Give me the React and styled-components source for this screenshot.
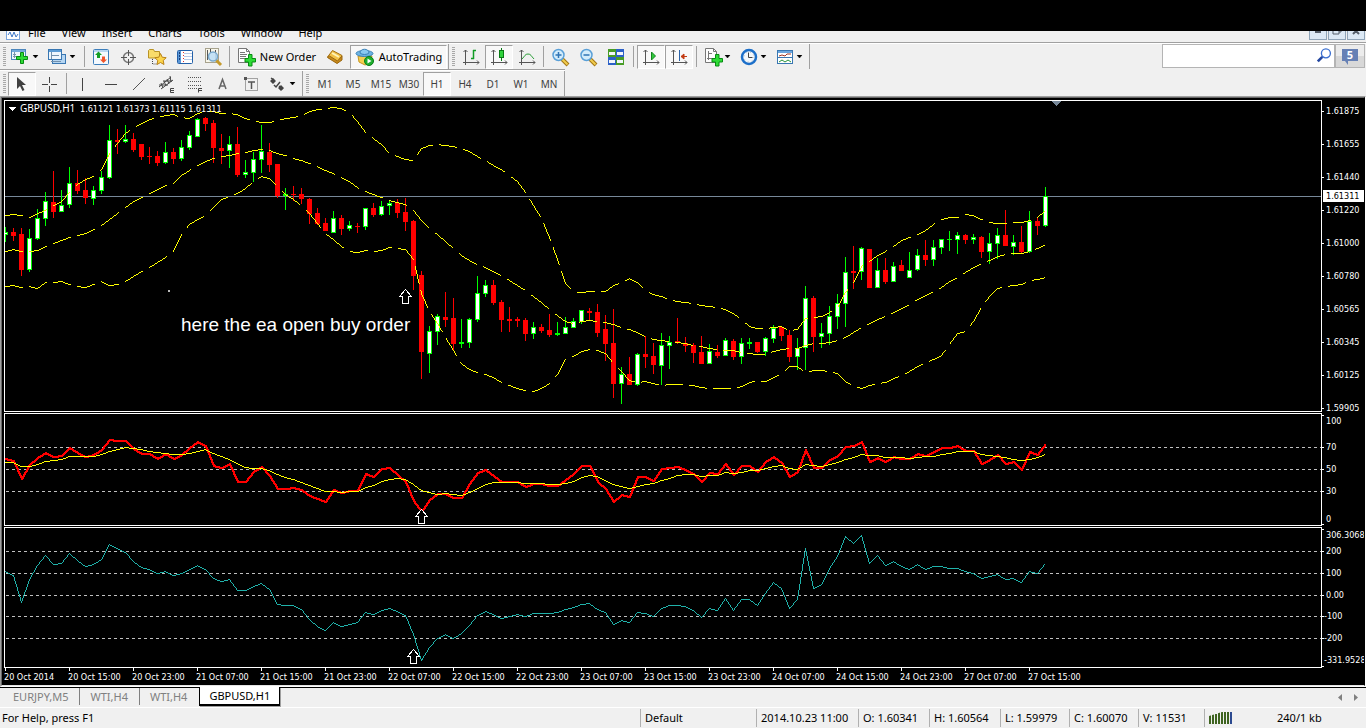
import React from "react";
import styled, { createGlobalStyle, css } from "styled-components";

const GlobalStyle = createGlobalStyle`
  * { box-sizing: border-box; }
  body { margin: 0; background: #f0f0f0; color: #000; font-family: "Noto Sans", "Open Sans", sans-serif; font-size: 11px; }
  button, input { font: inherit; color: inherit; }
`;

/* ---------- data ---------- */

const STEP = 8;
const FIRST_X = 5;
const PRICE_TOP = 101;
const RSI_TOP = 414;
const CCI_TOP = 528;
const barX = (i) => FIRST_X + i * STEP;

// direction, high, body top, body bottom, low
const CANDLES = `g 227 232 235 242|r 228 232 236 241|r 228 234 270 276|g 229 238 270 272|g 209 218 239 240|g 192 201 219 226|r 171 202 212 218|g 190 205 212 212|g 167 183 205 208|r 170 183 191 194|r 178 190 198 204|g 186 190 199 205|g 171 177 191 194|g 125 140 178 179|r 129 140 142 154|g 125 139 142 143|r 133 139 150 152|r 144 144 157 160|r 147 156 157 164|r 151 156 163 166|g 142 152 163 164|r 148 152 159 164|g 140 147 159 161|g 131 135 148 150|g 118 119 137 137|r 117 118 124 131|r 120 123 148 163|r 134 148 151 164|g 136 144 151 168|r 127 144 175 177|g 160 172 175 178|g 152 159 173 182|g 125 151 160 173|r 143 152 165 172|r 164 164 196 198|g 188 194 196 210|r 186 194 195 201|r 188 194 199 204|r 198 199 214 224|r 208 213 224 225|r 218 223 231 231|g 211 218 233 233|r 215 218 229 235|g 221 225 229 231|r 223 226 227 233|g 208 208 227 230|r 203 208 215 217|g 201 206 215 216|g 201 203 206 215|r 199 203 213 218|r 198 212 222 231|r 220 221 276 290|r 271 275 352 379|g 326 331 354 373|g 314 316 332 345|r 292 317 320 327|r 298 318 344 350|g 319 342 344 348|g 318 319 343 348|g 276 293 320 322|g 280 285 294 297|r 280 285 303 305|r 300 302 320 332|r 307 319 321 332|r 317 319 321 327|r 318 320 334 341|g 322 327 334 339|r 324 327 331 333|r 314 330 335 337|g 322 333 335 336|g 317 327 334 334|g 318 321 328 328|g 310 310 322 324|r 308 311 313 320|r 304 312 333 337|r 315 329 344 361|r 309 343 384 398|g 367 374 384 404|r 357 374 385 385|g 353 354 385 386|r 336 354 357 368|r 343 356 365 374|g 333 345 366 385|g 336 342 346 369|r 318 341 343 344|r 337 343 346 352|r 343 345 353 363|r 336 352 364 364|g 344 351 364 364|r 345 352 356 358|g 338 340 356 356|r 339 341 357 360|g 338 343 357 364|g 338 342 344 349|r 342 342 352 353|g 337 338 352 356|g 325 328 339 343|r 326 327 336 341|r 330 335 357 362|g 338 348 357 370|g 286 298 348 370|r 296 298 337 352|g 323 333 337 348|g 306 316 334 345|g 294 303 317 329|g 257 272 304 327|r 246 271 273 289|g 247 248 272 280|r 249 249 288 288|g 258 270 288 288|r 258 270 282 284|g 262 266 282 282|r 260 265 271 271|g 252 270 278 278|g 249 255 270 271|r 240 255 260 266|g 240 247 260 266|g 239 239 248 254|g 231 239 240 251|g 232 235 240 254|r 234 235 240 244|g 234 237 240 244|r 236 237 252 258|g 233 243 252 264|g 228 235 244 259|r 210 235 246 246|g 235 242 247 255|r 226 242 252 254|g 211 221 252 253|r 217 221 226 235|g 187 196 226 227`
  .split("|")
  .map((row) => {
    const [dir, ...n] = row.split(" ");
    const [high, top, bottom, low] = n.map(Number);
    return { up: dir === "g", high, top, bottom, low };
  });

const BAND_UPPER = [215,214,215,217,213,210,205,201,192,184,179,176,169,153,143,133,127,123,119,117,115,114,117,118,113,111,111,113,113,114,118,120,122,122,120,118,117,115,111,109,108,107,108,112,121,132,138,144,153,156,159,160,148,145,144,145,146,148,151,156,160,165,169,175,181,192,205,218,237,259,283,291,292,291,291,291,285,282,278,282,290,294,296,299,301,302,303,305,306,307,309,313,319,326,328,328,327,326,330,329,318,317,316,312,307,292,282,266,261,255,251,246,240,237,234,230,224,219,217,217,214,215,219,222,223,223,222,222,220,217,210];
const BAND_MIDDLE = [251,249,251,251,250,246,243,240,237,235,233,229,225,219,213,207,201,197,193,189,185,183,175,170,165,161,158,156,155,153,152,150,149,150,153,155,158,160,163,166,170,173,177,181,187,191,194,197,200,202,204,210,220,228,234,241,248,255,260,264,267,271,275,280,285,290,296,302,309,315,321,323,321,320,321,322,324,327,329,332,336,339,340,341,342,343,345,346,348,349,350,350,352,353,354,354,351,349,348,348,345,343,343,342,340,337,332,327,323,319,316,312,308,304,299,295,291,287,281,277,272,267,263,260,256,254,253,253,251,248,244];
const BAND_LOWER = [286,285,287,286,288,282,282,281,284,286,287,284,281,285,284,281,276,271,267,262,257,251,234,224,219,215,207,199,196,193,188,181,176,178,186,194,199,205,213,223,233,239,246,251,252,250,251,250,247,248,249,259,293,311,323,337,350,363,369,372,374,377,382,385,388,390,391,388,383,374,359,356,351,349,350,353,363,371,380,382,381,383,385,384,384,384,385,387,388,388,388,388,386,382,380,381,377,373,366,366,372,370,370,371,373,381,385,388,385,383,382,378,375,371,366,362,359,355,344,333,331,321,307,296,288,286,285,284,280,279,277];
const RSI = [459,461,479,465,458,453,457,456,448,453,457,455,450,440,441,441,449,454,454,459,454,459,455,448,442,446,466,468,464,482,482,472,467,476,489,489,488,490,496,499,502,490,493,491,491,474,477,469,468,475,482,501,512,500,494,494,498,498,484,473,470,476,482,482,482,487,484,484,486,486,480,474,466,466,482,489,502,495,497,477,477,481,469,468,467,470,474,482,473,474,464,475,466,466,472,462,457,463,477,472,450,468,468,460,456,447,446,442,462,458,462,457,459,459,454,456,452,448,448,446,451,451,464,460,455,464,462,470,452,455,444];
const RSI_AVG = [462,462,466,466,464,461,460,459,456,456,456,456,454,451,449,447,448,449,451,452,453,454,454,453,451,449,453,456,459,463,467,468,468,470,474,477,479,482,485,488,491,491,492,491,491,487,485,481,479,478,479,484,490,492,494,493,494,495,492,488,484,482,482,482,482,483,483,483,484,484,483,481,477,475,476,480,484,486,488,486,484,483,480,478,475,474,474,476,475,475,472,473,472,470,470,468,466,465,468,469,464,465,466,464,462,459,457,454,455,455,457,457,457,458,457,456,456,454,453,451,451,451,454,455,456,457,459,460,459,457,454];
const CCI = [571,575,602,579,565,555,564,563,553,560,566,564,559,544,548,552,561,567,569,573,571,575,573,569,565,569,578,581,579,590,590,586,583,589,604,605,605,609,619,626,630,622,626,624,622,612,614,610,608,611,615,634,660,647,638,634,638,633,625,615,611,614,618,616,614,616,613,613,613,612,609,607,604,603,609,612,624,620,622,612,613,616,608,605,605,606,610,617,608,610,598,610,599,599,605,593,582,588,608,599,548,588,584,568,556,536,543,535,563,555,565,561,566,569,564,569,566,566,568,568,571,573,578,576,574,579,578,582,571,573,563];

const PRICE_LABELS = ["1.61875", "1.61655", "1.61440", "1.61220", "1.61000", "1.60780", "1.60565", "1.60345", "1.60125", "1.59905"].map((text, k) => ({ text, y: 111 + 33 * k, tick: 111 + 33 * k }));
const RSI_LABELS = [
  { text: "100", y: 421, tick: 415 },
  { text: "70", y: 447, tick: 447 },
  { text: "50", y: 469, tick: 469 },
  { text: "30", y: 491, tick: 491 },
  { text: "0", y: 519, tick: 524 },
];
const CCI_LABELS = [
  { text: "306.3068", y: 535, tick: 529 },
  { text: "200", y: 551, tick: 551 },
  { text: "100", y: 573, tick: 573 },
  { text: "0.00", y: 595, tick: 595 },
  { text: "-100", y: 616, tick: 616 },
  { text: "-200", y: 638, tick: 638 },
  { text: "-331.9528", y: 660, tick: 666 },
];
const TIMES = ["20 Oct 2014", "20 Oct 15:00", "20 Oct 23:00", "21 Oct 07:00", "21 Oct 15:00", "21 Oct 23:00", "22 Oct 07:00", "22 Oct 15:00", "22 Oct 23:00", "23 Oct 07:00", "23 Oct 15:00", "23 Oct 23:00", "24 Oct 07:00", "24 Oct 15:00", "24 Oct 23:00", "27 Oct 07:00", "27 Oct 15:00"];

// Walks the line pixel by pixel; with dash lengths, counts steps along the longer axis.
function pixelPath(ys, { on = 1, off = 0, pen = 1 } = {}) {
  let d = "";
  let n = 0;
  for (let i = 0; i < ys.length - 1; i++) {
    const dy = ys[i + 1] - ys[i];
    const steps = Math.max(STEP, Math.abs(dy));
    for (let s = 0; s < steps; s++, n++) {
      if (n % (on + off) >= on) continue;
      const x = Math.round(barX(i) + (STEP * s) / steps);
      const y = Math.round(ys[i] + (dy * s) / steps) - (pen - 1);
      d += `M${x} ${y}h${pen}v${pen}h-${pen}z`;
    }
  }
  return d;
}

/* ---------- frame ---------- */

const Page = styled.div`
  min-height: 100vh;
  display: flex;
  flex-direction: column;
  background: #f0f0f0;
`;
const TopStrip = styled.div`
  height: 31px;
  background: #000;
`;
const MenuBar = styled.nav`
  display: flex;
  align-items: flex-end;
  height: 11px;
  padding: 0 1px 2px 6px;
  overflow: hidden;
`;
const MenuButton = styled.button`
  flex: none;
  border: 0;
  padding: 0 8px;
  background: none;
  line-height: 14px;
`;
const WindowButtons = styled.div`
  display: flex;
  gap: 1px;
  margin-left: auto;
`;
const WindowButton = styled.button`
  width: 18px;
  height: 18px;
  padding: 0;
  border: 1px solid #8fa4b8;
  background: #dce9f5;
  display: grid;
  place-items: center;
`;

/* ---------- toolbars ---------- */

const ToolRow = styled.div`
  display: flex;
  align-items: stretch;
  height: 27px;
  border-top: 1px solid #a0a0a0;
  box-shadow: inset 0 1px #fff;
  width: ${(p) => (p.$fit ? "max-content" : "auto")};
  padding-top: 1px;
`;
const Toolbar = styled.div`
  display: flex;
  align-items: center;
  padding-right: 1px;
  border-right: 1px solid #a0a0a0;
`;
const Grip = styled.span`
  width: 3px;
  height: 20px;
  margin: 0 2px 0 3px;
  background: repeating-linear-gradient(#a8a8a8 0 1px, #f0f0f0 1px 2px);
`;
const Separator = styled.span`
  width: 1px;
  height: 21px;
  margin: 0 ${(p) => p.$gap || 2}px;
  background: #a0a0a0;
`;
const pressed = css`
  background: #f8f8f8;
  border-color: #a0a0a0 #fff #fff #a0a0a0;
`;
const ToolButton = styled.button`
  display: flex;
  align-items: center;
  justify-content: center;
  gap: 4px;
  flex: none;
  width: ${(p) => p.$width || 28}px;
  height: 24px;
  padding: 0;
  border: 1px solid transparent;
  background: none;
  white-space: nowrap;
  ${(p) => p.$pressed && pressed}
`;
const DropToolButton = styled(ToolButton)`
  justify-content: flex-start;
  gap: 1px;
  padding-left: 2px;
`;
const PeriodButton = styled(ToolButton)`
  font-size: 10px;
  color: #404040;
`;
const Search = styled.label`
  display: flex;
  align-items: center;
  width: 173px;
  height: 24px;
  margin-left: auto;
  border: 1px solid #b4b4b4;
  background: #fff;
`;
const SearchInput = styled.input`
  flex: 1;
  min-width: 0;
  height: 20px;
  border: 0;
  outline: 0;
  padding: 0 4px;
  background: none;
`;
const ChatButton = styled.button`
  width: 30px;
  height: 24px;
  margin-right: 1px;
  padding: 0;
  border: 1px solid #b4b4b4;
  background: linear-gradient(#ececec 50%, #d8d8d8 50%);
  display: grid;
  place-items: center;
`;

/* ---------- chart ---------- */

const ChartWindow = styled.main`
  border-style: solid;
  border-width: 1px;
  border-color: #a0a0a0 #fff #fff #a0a0a0;
`;
const ChartInner = styled.div`
  border-style: solid;
  border-width: 1px;
  border-color: #696969 #000 #e3e3e3 #696969;
  background: #000;
  padding: 2px 0 0 2px;
  display: flex;
  flex-direction: column;
  gap: 1px;
`;
const PanelRow = styled.section`
  display: flex;
`;
const Plot = styled.div`
  flex: 1;
  min-width: 0;
  border: 1px solid #fff;
  overflow: hidden;
`;
const Drawing = styled.svg`
  display: block;
  width: 100%;
  height: ${(p) => p.$height}px;
`;
const Scale = styled.svg`
  flex: none;
  display: block;
  width: 42px;
  height: ${(p) => p.$height}px;
  overflow: hidden;
  font: 9px "DejaVu Sans Condensed", "Noto Sans", sans-serif;
  fill: #fff;
`;
const SymbolText = styled.text`
  font: 10px "Noto Sans", sans-serif;
  fill: #fff;
`;
const QuoteText = styled.text`
  font: 9px "DejaVu Sans Condensed", "Noto Sans", sans-serif;
  fill: #fff;
`;
const NoteText = styled.text`
  font: 19px "Liberation Sans", Arial, sans-serif;
  fill: #fff;
`;
const TimeScale = styled.div`
  display: flex;
  height: 17px;
  margin-top: -1px;
  overflow: hidden;
`;
const TimeLabel = styled.span`
  flex: none;
  width: 64px;
  color: #fff;
  font: 9px/12px "DejaVu Sans Condensed", "Noto Sans", sans-serif;
  white-space: nowrap;
  &::before {
    content: "";
    display: block;
    width: 1px;
    height: 3px;
    margin-left: 1px;
    background: #fff;
  }
`;

/* ---------- bottom bars ---------- */

const TabBar = styled.div`
  display: flex;
  height: 20px;
  padding-left: 2px;
  border-top: 1px solid #000;
`;
const Tab = styled.button`
  height: 17px;
  padding: 0 11px;
  border: 0;
  background: none;
  color: #808080;
  line-height: 16px;
  & + & {
    box-shadow: inset 1px 0 #808080;
  }
  ${(p) =>
    p.$active &&
    css`
      && {
        height: 19px;
        margin: -1px 0 0 1px;
        padding: 0 9px;
        border: 1px solid #000;
        border-top: 0;
        border-bottom-width: 2px;
        background: #fff;
        color: #000;
        box-shadow: 1px 1px #a0a0a0;
      }
    `}
`;
const TabArrows = styled.div`
  display: flex;
  align-items: center;
  gap: 12px;
  margin-left: auto;
  padding-right: 8px;
`;
const ArrowButton = styled.button`
  border: 0;
  padding: 0;
  background: none;
  display: flex;
`;
const StatusBar = styled.footer`
  flex: 1;
  display: grid;
  grid-template-columns: 1fr 116px 102px 71px 71px 69px 69px 66px 162px;
  align-items: center;
  min-height: 21px;
  border-top: 1px solid #fff;
  line-height: 18px;
`;
const StatusCell = styled.span`
  padding-left: ${(p) => (p.$first ? 2 : 4)}px;
  border-left: ${(p) => (p.$first ? 0 : 1)}px solid #b0b0b0;
  white-space: nowrap;
`;
const Connection = styled(StatusCell)`
  display: flex;
  align-items: center;
  gap: 44px;
  height: 18px;
`;

/* ---------- icons ---------- */

const Icon = ({ children, size = 20 }) => (
  <svg width={size} height={size} viewBox="0 0 20 20" fill="none" aria-hidden="true">
    {children}
  </svg>
);
const Drop = () => (
  <svg width="7" height="4" viewBox="0 0 7 4" aria-hidden="true">
    <path d="M1 0h5L3.500 3z" fill="#000" stroke="#000" strokeWidth=".5" />
  </svg>
);
const Plus = () => (
  <path d="M12.500 7.500h3.500v4h3.500v3.500h-3.500v4h-3.500v-4h-3.500v-3.500h3.500z" fill="#2ddb35" stroke="#078a12" />
);
const NewChartIcon = () => (
  <Icon>
    <rect x=".5" y="2.500" width="14" height="10" fill="#eef6fd" stroke="#4d87bd" />
    <path d="M1 4h13" stroke="#74aadb" strokeWidth="2" />
    <path d="M3.500 5v6M2 9.500h8M2 7.500h3" stroke="#7a95ad" />
    <path d="M9.500 5.500h3v4h4v3h-4v4h-3v-4h-4v-3h4z" fill="#2ddb35" stroke="#078a12" />
  </Icon>
);
const ProfilesIcon = () => (
  <Icon>
    <rect x="4.500" y="7.500" width="13" height="9" fill="#b6d6f2" stroke="#3977b2" />
    <rect x=".5" y="2.500" width="13" height="10" fill="#eef6fd" stroke="#3977b2" />
    <path d="M1 4h12" stroke="#5b9bd5" strokeWidth="2" />
    <path d="M3.500 5v7M3 8.500h8M3 14.500h10" stroke="#7391ad" />
  </Icon>
);
const MarketWatchIcon = () => (
  <Icon>
    <rect x="2.500" y="2.500" width="15" height="15" rx="1" fill="#f4f9fe" stroke="#3c7ebb" />
    <path d="M3 4h14" stroke="#7fb5e6" />
    <path d="M7.500 4.500l3.500 3.500h-2v3H6V8H4z" fill="#159e26" />
    <path d="M12.500 16l-3.500-3.500h2V9.500h3v3h2z" fill="#f0552b" />
  </Icon>
);
const TargetIcon = () => (
  <Icon>
    <circle cx="9.500" cy="10.500" r="5" stroke="#777" strokeWidth="1.500" />
    <path d="M9.500 3v6M9.500 12v6M2 10.500h6M11 10.500h6" stroke="#555" />
  </Icon>
);
const NavigatorIcon = () => (
  <Icon>
    <path d="M1.500 11V3.500l1-1h4l1 2h5V11z" fill="#f9dc6b" stroke="#b89325" />
    <path d="M5.500 12v5h5" stroke="#444" strokeDasharray="1 1" />
    <path d="M13.500 6.500l1.700 3.700 4 .5-3 2.800.8 4-3.500-2-3.500 2 .8-4-3-2.800 4-.5z" fill="#fcd54b" stroke="#b98317" />
  </Icon>
);
const TerminalIcon = () => (
  <Icon>
    <rect x="2.500" y="3.500" width="15" height="13" rx="1" fill="#fff" stroke="#2360a8" />
    <rect x="3" y="4" width="3" height="12" fill="#5b97d6" />
    <path d="M9 6.500h8M9 9.500h8M9 12.500h8" stroke="#b8cbe8" />
    <path d="M4.500 5v8" stroke="#173f7a" strokeDasharray="2 1" />
    <path d="M8.500 5v10" stroke="#d33" strokeDasharray="1 2" />
  </Icon>
);
const TesterIcon = () => (
  <Icon>
    <rect x="2.500" y="1.500" width="13" height="14" fill="#f8f6ea" stroke="#a7a28d" />
    <path d="M4.500 3v10M7.500 2v4M12.500 3v9" stroke="#555" />
    <path d="M13 13l5 5" stroke="#c59a2c" strokeWidth="3" />
    <circle cx="10" cy="9.500" r="4.500" fill="#bfe0f6" fillOpacity=".9" stroke="#7aa9cd" strokeWidth="1.500" />
  </Icon>
);
const OrderIcon = ({ chart }) => (
  <Icon>
    <path d="M2.500 1.500h8l3 3v11h-11z" fill="#fdfdfd" stroke="#777" />
    <path d="M10.500 1.500v3h3" stroke="#777" />
    <path d={chart ? "M5.500 4v9M4 11.500h5M5 6.500h4" : "M4 5.500h5M4 7.500h7M4 9.500h6M4 11.500h5"} stroke="#777" />
    <Plus />
  </Icon>
);
const MetaEditorIcon = () => (
  <Icon>
    <path d="M2.500 10l5-6.500 9.500 5-4 7.500z" fill="#f3c247" stroke="#a46f12" />
    <path d="M2.500 10.500l9.500 6 5-3.500V9l-4.500 5-8-5z" fill="#c88a1c" stroke="#9a6710" />
    <path d="M7 6l7 4" stroke="#fff3b8" strokeWidth="2" />
  </Icon>
);
const AutoIcon = () => (
  <Icon>
    <path d="M3 9h14l-2 7-5 2-6-3z" fill="#f5cf4f" stroke="#c69522" />
    <ellipse cx="9.500" cy="6.500" rx="8.500" ry="3" fill="#6db3e2" stroke="#3b82b8" />
    <path d="M5 6c0-5 9-5 9 0-2 2-7 2-9 0z" fill="#8ac9f1" stroke="#3b82b8" />
    <circle cx="14" cy="14" r="4.500" fill="#1fae2e" stroke="#0a7d17" />
    <path d="M12.500 11.500v5l4-2.500z" fill="#fff" />
  </Icon>
);
const Axes = () => <path d="M4.500 3v15M2 15.500h16M2.500 5l2-2 2 2M16 13.500l2 2-2 2" stroke="#555" />;
const BarsIcon = () => (
  <Icon><Axes /><path d="M12.500 3v9M12 3.500h3M10 11.500h3" stroke="#119c24" strokeWidth="1.500" /></Icon>
);
const CandleIcon = () => (
  <Icon><Axes /><path d="M12.500 1v13" stroke="#087b14" /><rect x="10.500" y="3.500" width="4" height="7" fill="#30d23c" stroke="#087b14" /></Icon>
);
const LineIcon = () => (
  <Icon><Axes /><path d="M5 12c3-3 3-5 6-5s3 2 6 5" stroke="#2b9e38" /></Icon>
);
const ZoomIcon = ({ plus }) => (
  <Icon>
    <path d="M12 12l6 6" stroke="#a37614" strokeWidth="4" />
    <path d="M12 12l5.500 5.500" stroke="#f1cd4e" strokeWidth="2" />
    <circle cx="8.500" cy="8" r="5.500" fill="#d3ecfb" stroke="#5aa0d8" strokeWidth="1.500" />
    <path d={plus ? "M5.500 8h6M8.500 5v6" : "M5.500 8h6"} stroke="#2f74b5" strokeWidth="1.500" />
  </Icon>
);
const TileIcon = () => (
  <Icon>
    <rect x="2" y="2" width="8" height="8" fill="#489c26" /><rect x="10" y="2" width="8" height="8" fill="#2c61c8" />
    <rect x="2" y="10" width="8" height="8" fill="#2c61c8" /><rect x="10" y="10" width="8" height="8" fill="#489c26" />
    <path d="M3 6.500h6M11 6.500h6M3 14.500h6M11 14.500h6" stroke="#f3f6fb" strokeWidth="3" />
  </Icon>
);
const ScrollIcon = () => (
  <Icon><Axes /><path d="M10.500 5v8l4-4z" fill="#31c73c" stroke="#12871e" /></Icon>
);
const ShiftIcon = () => (
  <Icon><Axes /><path d="M10.500 3v11" stroke="#2a62a8" /><path d="M12 9.500h6M15 7l-3 2.500 3 2.500z" stroke="#c23b12" fill="#c23b12" /></Icon>
);
const ClockIcon = () => (
  <Icon>
    <circle cx="10" cy="10" r="7" fill="#f4f8fc" stroke="#1c6fc9" strokeWidth="2.500" />
    <path d="M9.500 5.500v5h4" stroke="#444" /><circle cx="10" cy="10" r="5" stroke="#a8b4c0" strokeDasharray="1 3" />
  </Icon>
);
const TemplateIcon = () => (
  <Icon>
    <rect x="2.500" y="3.500" width="15" height="13" fill="#fff" stroke="#3977b2" />
    <path d="M3 5h14" stroke="#6aa6de" strokeWidth="2" />
    <path d="M3 10.500h14" stroke="#3977b2" />
    <path d="M4 9l3-1 3 1 2-2h4" stroke="#9e3524" /><path d="M4 15l3-2 3 2 3-2 3 2" stroke="#27943a" />
  </Icon>
);
const CursorIcon = () => (
  <Icon><path d="M5 3v12l3-3 2.500 5 2-1-2.500-5h4z" fill="#404040" /></Icon>
);
const CrossIcon = () => <Icon><path d="M9.500 3v6M9.500 12v6M2 10.500h6M11 10.500h6" stroke="#444" /></Icon>;
const VLineIcon = () => <Icon><path d="M9.500 4v13" stroke="#444" /></Icon>;
const HLineIcon = () => <Icon><path d="M4 10.500h12" stroke="#444" /></Icon>;
const TrendIcon = () => <Icon><path d="M4 16L16 4" stroke="#555" /></Icon>;
const EquidistantIcon = () => (
  <Icon>
    <path d="M2 13L14 3M4 15L16 6M4 9l2 5M7 7l2 5M10 5l2 5M13 2l1 6M2 11h9M6 7h9" stroke="#444" />
    <path d="M17 14.500h-3.500v4H17M14 16.500h3" stroke="#444" />
  </Icon>
);
const FiboIcon = () => (
  <Icon>
    <path d="M3 3.500h14M3 7.500h14M3 11.500h14M3 14.500h9" stroke="#555" strokeDasharray="1 1" />
    <path d="M17 14.500h-3.500v4M14 16.500h3" stroke="#444" />
  </Icon>
);
const TextIcon = () => <Icon><path d="M6 15l3.500-9.500L13 15M7 12h5" stroke="#666" strokeWidth="1.500" /></Icon>;
const LabelIcon = () => (
  <Icon>
    <rect x="4.500" y="4.500" width="12" height="12" stroke="#555" strokeDasharray="1 1" />
    <path d="M3 3h3v3H3z" fill="#555" /><path d="M7 8h7M10.500 8v7" stroke="#555" strokeWidth="1.500" />
  </Icon>
);
const ArrowsIcon = () => (
  <Icon>
    <path d="M2 7l3-3 3 3-3 3zM10 14l3-3 3 3-3 3z" fill="#444" />
    <path d="M6 11l2 2 4-5M3 4l3 2M11 12l4 3" stroke="#444" strokeWidth="1.500" />
  </Icon>
);

const UpArrow = ({ x, y }) => (
  <path d={`M${x}.5 ${y}.5l6 7h-3v7h-6v-7h-3z`} fill="#000" stroke="#fff" />
);
const Levels = ({ values }) =>
  values.map((y) => (
    <line key={y} x1="6" x2="4000" y1={y + 0.5} y2={y + 0.5} stroke="#c0c0c0" strokeDasharray="3 3" />
  ));
const Ticks = ({ labels, top }) => (
  <g transform={`translate(0 ${-top})`}>
    {labels.map((l) => (
      <g key={l.text}>
        <rect x="0" y={l.tick} width="2" height="1" />
        <text x={l.text.startsWith("-") ? 2 : 4} y={l.y + 3}>{l.text}</text>
      </g>
    ))}
  </g>
);

/* ---------- page ---------- */

const MENU = ["File", "View", "Insert", "Charts", "Tools", "Window", "Help"];
const PERIODS = ["M1", "M5", "M15", "M30", "H1", "H4", "D1", "W1", "MN"];
const SIGNAL = [0, 1, 2, 3, 4, 5, 6, 7];

const tool = (label, icon, isPressed) => (
  <ToolButton aria-label={label} $pressed={isPressed}>{icon}</ToolButton>
);
const dropTool = (label, icon, width = 36) => (
  <DropToolButton aria-label={label} $width={width}>{icon}<Drop /></DropToolButton>
);

export default function App() {
  return (
    <Page>
      <GlobalStyle />
      <TopStrip />
      <MenuBar>
        <svg width="14" height="14" viewBox="0 0 14 14" aria-hidden="true">
          <rect x=".5" y=".5" width="13" height="13" fill="#fff" stroke="#7ba5dd" />
          <path d="M2 9l2-3 2 5 2-5 2 5 2-3" stroke="#3f78c8" fill="none" />
        </svg>
        {MENU.map((m) => (
          <MenuButton key={m}>{m}</MenuButton>
        ))}
        <WindowButtons>
          <WindowButton aria-label="Minimize"><svg width="8" height="8"><path d="M1 5h6" stroke="#555f6b" strokeWidth="2" /></svg></WindowButton>
          <WindowButton aria-label="Restore"><svg width="10" height="10"><path d="M3 3V1h6v5H7M1 3h6v5H1z" stroke="#555f6b" fill="none" /></svg></WindowButton>
          <WindowButton aria-label="Close"><svg width="8" height="8"><path d="M1 1l6 6M7 1L1 7" stroke="#555f6b" strokeWidth="2" /></svg></WindowButton>
        </WindowButtons>
      </MenuBar>

      <ToolRow>
        <Toolbar>
          <Grip />
          {dropTool("New chart", <NewChartIcon />, 37)}
          {dropTool("Profiles", <ProfilesIcon />, 37)}
          <Separator />
          {tool("Market Watch", <MarketWatchIcon />)}
          {tool("Data Window", <TargetIcon />)}
          {tool("Navigator", <NavigatorIcon />)}
          {tool("Terminal", <TerminalIcon />)}
          {tool("Strategy Tester", <TesterIcon />)}
          <Separator />
          <ToolButton $width={88}><OrderIcon />New Order</ToolButton>
          <ToolButton $width={30} aria-label="MetaEditor"><MetaEditorIcon /></ToolButton>
          <ToolButton $width={97} $pressed><AutoIcon />AutoTrading</ToolButton>
        </Toolbar>
        <Toolbar>
          <Grip />
          {tool("Bar Chart", <BarsIcon />)}
          {tool("Candlesticks", <CandleIcon />, true)}
          {tool("Line Chart", <LineIcon />)}
          <Separator />
          {tool("Zoom In", <ZoomIcon plus />)}
          {tool("Zoom Out", <ZoomIcon />)}
          {tool("Tile Windows", <TileIcon />)}
          <Separator $gap={3} />
          {tool("Auto Scroll", <ScrollIcon />, true)}
          {tool("Chart Shift", <ShiftIcon />, true)}
          <Separator $gap={3} />
          {dropTool("Indicators", <OrderIcon chart />)}
          {dropTool("Periods", <ClockIcon />)}
          {dropTool("Templates", <TemplateIcon />)}
        </Toolbar>
        <Search>
          <SearchInput type="text" aria-label="Search" />
          <Icon size={18}>
            <circle cx="11" cy="7" r="5" fill="#fff" stroke="#3b6fd0" strokeWidth="1.500" />
            <path d="M7 11l-5 5" stroke="#2346a0" strokeWidth="3" />
          </Icon>
        </Search>
        <ChatButton aria-label="5 messages">
          <svg width="18" height="18" viewBox="0 0 18 18" aria-hidden="true">
            <path d="M1 2h16v12H7v4l-3-4H1z" fill="#6680b5" />
            <text x="9" y="12" fill="#fff" fontSize="11" fontWeight="700" textAnchor="middle">5</text>
          </svg>
        </ChatButton>
      </ToolRow>

      <ToolRow $fit>
        <Toolbar>
          <Grip />
          {tool("Cursor", <CursorIcon />, true)}
          {tool("Crosshair", <CrossIcon />)}
          <Separator />
          {tool("Vertical Line", <VLineIcon />)}
          {tool("Horizontal Line", <HLineIcon />)}
          {tool("Trendline", <TrendIcon />)}
          {tool("Equidistant Channel", <EquidistantIcon />)}
          {tool("Fibonacci", <FiboIcon />)}
          {tool("Text", <TextIcon />)}
          {tool("Text Label", <LabelIcon />)}
          {dropTool("Arrows", <ArrowsIcon />)}
        </Toolbar>
        <Toolbar>
          <Grip />
          {PERIODS.map((p) => (
            <PeriodButton key={p} $pressed={p === "H1"}>{p}</PeriodButton>
          ))}
        </Toolbar>
      </ToolRow>

      <ChartWindow>
        <ChartInner>
          <PanelRow>
            <Plot>
              <Drawing $height={310} shapeRendering="crispEdges">
                <g transform={`translate(${-FIRST_X} ${-PRICE_TOP})`}>
                  <rect x="5" y="196" width="4000" height="1" fill="#778899" />
                  {CANDLES.map((c, i) => {
                    const x = barX(i);
                    const color = c.up ? "#00ff00" : "#ff0000";
                    const h = c.bottom - c.top;
                    return (
                      <g key={i}>
                        <rect x={x} y={c.high} width="1" height={c.low - c.high} fill={color} />
                        <rect x={x - 2} y={c.top} width="5" height={h} fill={color} />
                        {c.up && h > 2 && <rect x={x - 1} y={c.top + 1} width="3" height={h - 2} fill="#fff" />}
                      </g>
                    );
                  })}
                  {[BAND_UPPER, BAND_MIDDLE, BAND_LOWER].map((band, i) => (
                    <path key={i} d={pixelPath(band, { on: 18, off: 6 })} fill="#ffff00" />
                  ))}
                  <path d="M8 107h8l-4 4z" fill="#fff" />
                  <path d="M1051 101h10l-5 5z" fill="#778899" />
                  <rect x="168" y="290" width="2" height="2" fill="#bbb" />
                  <SymbolText x="20" y="112">GBPUSD,H1</SymbolText>
                  <QuoteText x="80" y="112">1.61121 1.61373 1.61115 1.61311</QuoteText>
                  <NoteText x="181" y="331">here the ea open buy order</NoteText>
                  <UpArrow x={405} y={289} />
                </g>
              </Drawing>
            </Plot>
            <Scale $height={312}>
              <Ticks labels={PRICE_LABELS} top={PRICE_TOP - 1} />
              <rect x="1" y="90" width="41" height="12" />
              <text x="4" y="99" fill="#000">1.61311</text>
            </Scale>
          </PanelRow>
          <PanelRow>
            <Plot>
              <Drawing $height={111} shapeRendering="crispEdges">
                <g transform={`translate(${-FIRST_X} ${-RSI_TOP})`}>
                  <Levels values={[447, 469, 491]} />
                  <path d={pixelPath(RSI, { pen: 2 })} fill="#ff0000" />
                  <path d={pixelPath(RSI_AVG)} fill="#ffff00" />
                  <UpArrow x={421} y={509} />
                </g>
              </Drawing>
            </Plot>
            <Scale $height={113}>
              <Ticks labels={RSI_LABELS} top={RSI_TOP - 1} />
            </Scale>
          </PanelRow>
          <PanelRow>
            <Plot>
              <Drawing $height={139} shapeRendering="crispEdges">
                <g transform={`translate(${-FIRST_X} ${-CCI_TOP})`}>
                  <Levels values={[551, 573, 595, 616, 638]} />
                  <path d={pixelPath(CCI)} fill="#20b2aa" />
                  <UpArrow x={413} y={649} />
                </g>
              </Drawing>
            </Plot>
            <Scale $height={141}>
              <Ticks labels={CCI_LABELS} top={CCI_TOP - 1} />
            </Scale>
          </PanelRow>
          <TimeScale>
            {TIMES.map((t) => (
              <TimeLabel key={t}>{t}</TimeLabel>
            ))}
          </TimeScale>
        </ChartInner>
      </ChartWindow>

      <TabBar>
        <Tab>EURJPY,M5</Tab>
        <Tab>WTI,H4</Tab>
        <Tab>WTI,H4</Tab>
        <Tab $active>GBPUSD,H1</Tab>
        <TabArrows>
          <ArrowButton aria-label="Previous tab"><svg width="4" height="7"><path d="M4 0v7L0 3.500z" fill="#808080" /></svg></ArrowButton>
          <ArrowButton aria-label="Next tab"><svg width="4" height="7"><path d="M0 0v7l4-3.500z" fill="#808080" /></svg></ArrowButton>
        </TabArrows>
      </TabBar>

      <StatusBar>
        <StatusCell $first>For Help, press F1</StatusCell>
        <StatusCell>Default</StatusCell>
        <StatusCell>2014.10.23 11:00</StatusCell>
        <StatusCell>O: 1.60341</StatusCell>
        <StatusCell>H: 1.60564</StatusCell>
        <StatusCell>L: 1.59979</StatusCell>
        <StatusCell>C: 1.60070</StatusCell>
        <StatusCell>V: 11531</StatusCell>
        <Connection>
          <svg width="24" height="13" aria-hidden="true">
            {SIGNAL.map((i) => (
              <rect key={i} x={i * 3} y={i < 3 ? 2 : 0} width="2" height={i < 3 ? 10 : 12} fill={i < 7 ? "#3f6420" : "#2c4a90"} />
            ))}
            <path d="M0 0h13L0 4z" fill="#f0f0f0" />
          </svg>
          240/1 kb
        </Connection>
      </StatusBar>
    </Page>
  );
}
